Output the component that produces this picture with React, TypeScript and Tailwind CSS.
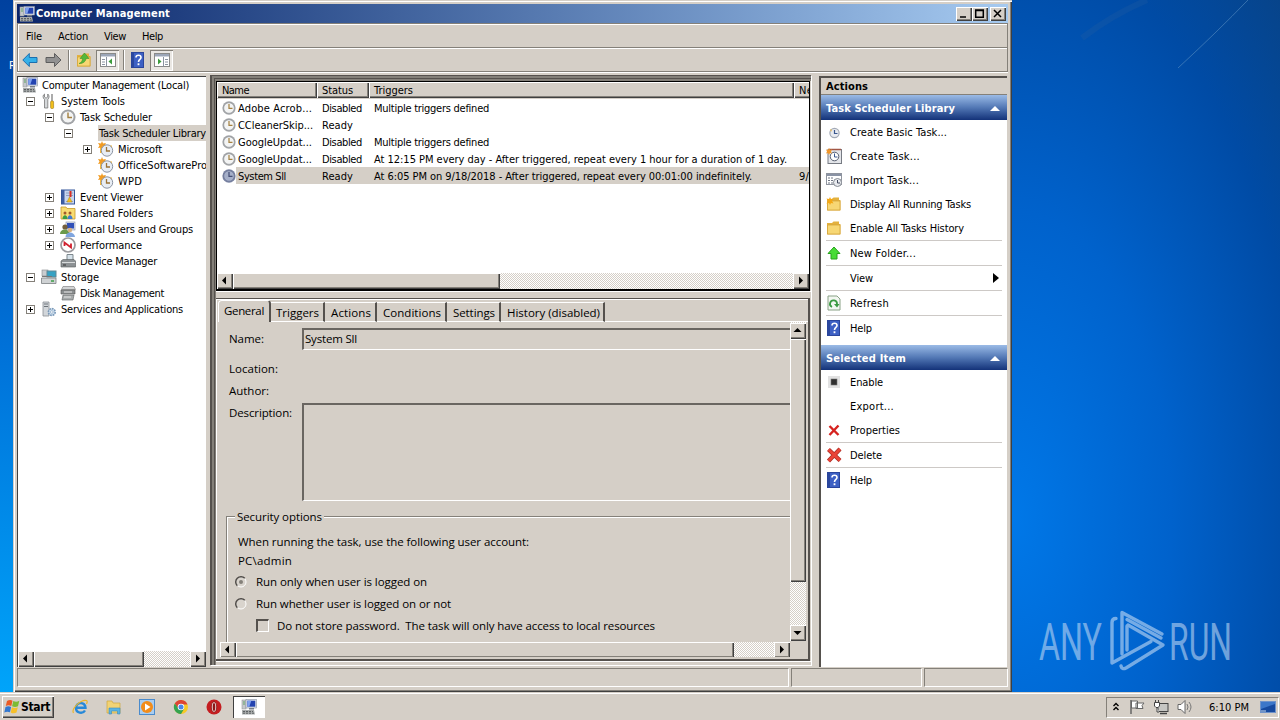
import { useLayoutEffect, useRef, useState, type ReactNode } from "react";

const TAHOMA = "font-['DejaVu_Sans_Condensed','DejaVu_Sans',sans-serif] text-[11px] leading-[13px]";
const SEGOE = "font-['Open_Sans','Noto_Sans',sans-serif] text-[11.5px] leading-[15px]";
const RAISED = "bg-[#d5cfc7] shadow-[inset_1px_1px_0_#fff,inset_-1px_-1px_0_#404040,inset_-2px_-2px_0_#848079]";
const TRACK = "bg-[conic-gradient(#fff_25%,#d5cfc7_0_50%,#fff_0_75%,#d5cfc7_0)] bg-[length:2px_2px]";

// Text that tracks its letters so that the run is exactly `w` pixels wide
function Label({ w, className = "", children }: { w: number; className?: string; children: string }) {
    const ref = useRef<HTMLSpanElement>(null);
    const [spacing, setSpacing] = useState(0);

    useLayoutEffect(() => {
        if (!ref.current) return;
        const el = ref.current;
        el.style.letterSpacing = "0px";
        const natural = el.getBoundingClientRect().width;
        const next = (w - natural) / children.length;
        el.style.letterSpacing = `${next}px`;
        setSpacing(next);
    }, [w, children]);

    return (
        <span ref={ref} className={`inline-block shrink-0 whitespace-pre ${className}`} style={{ letterSpacing: spacing }}>
            {children}
        </span>
    );
}

function Svg({ children, size = 16, className = "" }: { children?: ReactNode; size?: number; className?: string }) {
    return (
        <svg width={size} height={size} viewBox="0 0 16 16" className={`block shrink-0 ${className}`}>
            {children}
        </svg>
    );
}

/* ---------- icons ---------- */

const ComputerIcon = () => (
    <Svg>
        <rect x="1" y="1" width="4" height="9" fill="#c4c8cc" stroke="#999" strokeWidth=".6" />
        <path d="M2 3h2M2 5h2" stroke="#4a9a4a" strokeWidth=".8" />
        <rect x="5" y="0.5" width="10.5" height="8.5" fill="#e1e5ec" stroke="#8890a0" strokeWidth=".6" />
        <rect x="6.3" y="1.7" width="8" height="6" fill="#2343b0" />
        <path d="M6.3 1.7h4l-2 6h-2z" fill="#7fa0ee" />
        <path d="M8 9h5v1.5H8z" fill="#777e88" />
        <path d="M1 11h12l1 4.5H1z" fill="#a8abab" />
        <path d="M2 12.5h10M2 14.2h11" stroke="#5c6062" strokeDasharray="2 1" />
    </Svg>
);
const ToolsIcon = () => (
    <Svg>
        <path d="M3.5 1v3l1.5 1.2L6.7 4V1C8.5 2 8.5 5 6.8 6.5V15H3.5V6.5C1.600 5 1.600 2 3.500 1z" fill="#d5d8da" stroke="#777" strokeWidth=".8" />
        <path d="M11 1v7" stroke="#888" strokeWidth="1.4" />
        <rect x="9.6" y="8" width="3" height="7.500" rx="1" fill="#f2c01c" stroke="#9a7510" strokeWidth=".6" />
    </Svg>
);
const ClockIcon = ({ dark = false, size = 16 }: { dark?: boolean; size?: number }) => (
    <Svg size={size}>
        <circle cx="8" cy="8" r="7.6" fill={dark ? "#7983a2" : "#a3a5a8"} />
        <circle cx="8" cy="8" r="6" fill={dark ? "#a5afc9" : "#f3f4f4"} stroke={dark ? "#606a8c" : "#8b8e94"} strokeWidth=".6" />
        <path d="M8 3.500v5h4" fill="none" stroke={dark ? "#444d74" : "#a48142"} strokeWidth="1.4" />
    </Svg>
);
const ClockFolderIcon = () => (
    <Svg>
        <path d="M2 3h5l1 1.500h6V12H2z" fill="#f6b93b" />
        <path d="M4 0l1 2.500L8 2 6.500 4.500 8 7 5 6.500 4 9 3 6.500 0 7l1.500-2.500L0 2l3 .5z" fill="#f19b22" />
        <circle cx="9" cy="9.500" r="5.700" fill="#e8edf4" stroke="#8a93a1" />
        <path d="M8.500 6v4h3.500" fill="none" stroke="#9b7336" strokeWidth="1.300" />
    </Svg>
);
const EventIcon = () => (
    <Svg>
        <rect x="1.500" y="1" width="13" height="14" fill="#c7d4ee" stroke="#35569b" />
        <path d="M2 1h2.500v14H2z" fill="#3d5da3" />
        <path d="M6 4h7M6 6.500h7M6 12.500h7" stroke="#8294b8" strokeWidth=".8" />
        <path d="M9.500 2h2v6h-2z" fill="#d93025" />
        <path d="M7 13l2.500-5 2.500 5z" fill="#f4c21b" stroke="#b58a12" strokeWidth=".5" />
    </Svg>
);
const SharedIcon = () => (
    <Svg>
        <path d="M1 2h5l1 1.500h8V14H1z" fill="#f8dc72" stroke="#c69a2a" strokeWidth=".8" />
        <circle cx="5" cy="8" r="1.500" fill="#a15a2a" />
        <circle cx="10" cy="8" r="1.500" fill="#a15a2a" />
        <path d="M2.500 14c0-5 5-5 5 0z" fill="#3a9d43" />
        <path d="M7.500 14c0-5 5-5 5 0z" fill="#3f7bd0" />
    </Svg>
);
const UsersIcon = () => (
    <Svg>
        <rect x="6" y="1" width="9" height="8" fill="#dfe5f3" stroke="#8089a5" strokeWidth=".6" />
        <rect x="7" y="2" width="7" height="5.500" fill="#3050b8" />
        <circle cx="5" cy="6" r="2.600" fill="#75603d" />
        <path d="M0 13c0-6 9-6 10 0z" fill="#6c9a4b" />
        <circle cx="10" cy="9" r="2.200" fill="#d8b07e" />
        <path d="M5.500 16c0-6 9-6 9.500 0z" fill="#7fa5df" />
    </Svg>
);
const PerformanceIcon = () => (
    <Svg>
        <circle cx="8" cy="8" r="7" fill="#fff" stroke="#9a9a9e" strokeWidth="1.700" />
        <path d="M4.500 9V5.500l6.500 5V6.500" fill="none" stroke="#d0202e" strokeWidth="1.800" />
    </Svg>
);
const DeviceIcon = () => (
    <Svg>
        <path d="M7 7V1.500h6V7" fill="#d6e2ea" stroke="#7d878d" />
        <path d="M1 8l2-1.500h11L15.500 8v6H1z" fill="#8d9295" stroke="#565a5c" strokeWidth=".6" />
        <path d="M2 9.500h13" stroke="#d9dcdd" />
        <path d="M3 12h3" stroke="#333" />
    </Svg>
);
const StorageIcon = () => (
    <Svg>
        <rect x="1" y="1" width="6" height="6" fill="#c9cccf" stroke="#85898c" strokeWidth=".6" />
        <rect x="6" y="2" width="9" height="6" fill="#36a2c4" stroke="#5f8795" />
        <path d="M0.500 9h14.500v5.500H.5z" fill="#cfd2d4" stroke="#7b7f82" strokeWidth=".8" />
        <path d="M1 7.500h10" stroke="#777" />
        <path d="M10 12h3" stroke="#3c9e47" strokeWidth="1.500" />
    </Svg>
);
const DiskIcon = () => (
    <Svg>
        <path d="M3 1.500h11l1.500 3H1.500z" fill="#d2d4d5" stroke="#777" strokeWidth=".6" />
        <path d="M1 5h14v4H1z" fill="#8c9092" stroke="#555" strokeWidth=".6" />
        <path d="M3 10h11l-1 5H2z" fill="#a7abac" stroke="#606365" strokeWidth=".6" />
        <path d="M4 7h8M4 12h7" stroke="#e5e5e5" />
    </Svg>
);
const ServicesIcon = () => (
    <Svg>
        <path d="M2 1h6v14H2z" fill="#d2d6da" stroke="#8a9096" strokeWidth=".8" />
        <path d="M3 3h4M3 5.500h4" stroke="#6c7378" />
        <circle cx="10.800" cy="11" r="3.400" fill="#cfe0f0" stroke="#7998b8" strokeWidth="1.600" strokeDasharray="1.800 .8" />
        <circle cx="10.800" cy="11" r="1.300" fill="#fff" stroke="#7998b8" strokeWidth=".6" />
    </Svg>
);
const HelpIcon = () => (
    <Svg>
        <rect x="1.500" y=".5" width="12" height="15" fill="#3d60c4" stroke="#2a459c" />
        <path d="M2 1h2v14H2z" fill="#2a479f" />
        <path d="M6 5.500C6 2.500 11 2.500 11 5.500 11 7.500 8.500 7.500 8.500 10" fill="none" stroke="#fff" strokeWidth="1.600" />
        <rect x="7.600" y="11.300" width="1.800" height="1.900" fill="#fff" />
    </Svg>
);
const ConsoleIcon = ({ left = false }: { left?: boolean }) => (
    <Svg>
        <rect x=".5" y="1.500" width="15" height="13" fill="#fff" stroke="#8a8a88" />
        <path d="M1 2h14v2.500H1z" fill="#9ca6b8" />
        {left ? (
            <path d="M2 7.500h3M2 10h3M2 12.500h3M6.500 5v9.500" stroke="#8b93a0" />
        ) : (
            <path d="M11 7.500h3M11 10h3M11 12.500h3M9.500 5v9.500" stroke="#8b93a0" />
        )}
        <path d={left ? "M12 6.500v6L8.500 9.500z" : "M4 6.500v6l3.500-3z"} fill="#3c9c3c" />
    </Svg>
);
const FolderIcon = ({ star = false, up = false }: { star?: boolean; up?: boolean }) => (
    <Svg>
        <path d="M1 3h5l1.500-1.500H13V4h1.500v10.500H1z" fill="#e3b13f" />
        <path d="M1.500 5H14v9H1.500z" fill="#f7d774" stroke="#d0a035" strokeWidth=".7" />
        {star && <path d="M4 1l1 2 2.500-.5L6 5l1.500 2.500L5 7 4 9 3 7 .5 7.500 2 5 .5 2.500 3 3z" fill="#f5a814" />}
        {up && <path d="M3 11.500c2.500-1 3.500-3 3.500-5H4L8.500 1l4.500 5.500h-3C10 9 7 12 3 11.500z" fill="#54b83b" stroke="#2e8a24" strokeWidth=".5" />}
    </Svg>
);
const BasicTaskIcon = () => (
    <Svg>
        <circle cx="8.500" cy="9" r="4.600" fill="#e7eaf0" stroke="#a2a9b5" strokeWidth="1.200" />
        <path d="M8.500 6v3.500h3" fill="none" stroke="#39578e" strokeWidth="1.200" />
        <path d="M4 5l2 1-1 2z" fill="#efbf54" />
    </Svg>
);
const CreateTaskIcon = () => (
    <Svg>
        <rect x="2" y="1.500" width="13.500" height="14" fill="#e3e5e9" stroke="#777b83" />
        <path d="M2.500 1.500h12.500" stroke="#a15646" strokeWidth="1.500" />
        <circle cx="8.500" cy="8.500" r="4.300" fill="#fff" stroke="#555d6e" />
        <path d="M8.500 5.500v3.500h3" fill="none" stroke="#39578e" />
        <path d="M3 0l1 2 2-.5L5 3.500l1 2L4 5 3 7 2 5 0 5.500l1-2-1-2 2 .5z" fill="#f0962a" />
    </Svg>
);
const ImportIcon = () => (
    <Svg>
        <rect x=".5" y="1.500" width="15" height="11" fill="#fff" stroke="#8f949e" />
        <path d="M1 3h14" stroke="#8a93a5" strokeWidth="2" />
        <path d="M2 6h6M2 8.500h6M2 11h6" stroke="#6f7684" strokeDasharray="2 1" />
        <circle cx="11.500" cy="10.500" r="4" fill="#e8eaee" stroke="#868b93" />
        <path d="M11.500 8v3H14" fill="none" stroke="#444c60" />
    </Svg>
);
const UpArrowIcon = () => (
    <Svg>
        <path d="M8 2l6 6.500h-3V14H5V8.500H2z" fill="#48dc36" stroke="#28a21d" />
    </Svg>
);
const RefreshIcon = () => (
    <Svg>
        <path d="M2 1h9l3 3v11H2z" fill="#f2f7f1" stroke="#89a186" />
        <path d="M6 12A3.500 3.500 0 1 1 11 9" fill="none" stroke="#3a9a42" strokeWidth="1.800" />
        <path d="M8 9h5.500L11 12.500z" fill="#3a9a42" />
    </Svg>
);
const EnableIcon = () => (
    <Svg>
        <rect x="2" y="2" width="12" height="12" fill="#e2e2e2" />
        <rect x="5" y="5" width="6" height="6" fill="#303030" stroke="#777" strokeWidth=".6" />
    </Svg>
);
const CrossIcon = ({ big = false }: { big?: boolean }) => (
    <Svg>
        {big ? (
            <>
                <path d="M2.500 2.500l11.500 11M14 2L2.500 14" stroke="#a82a22" strokeWidth="4.200" />
                <path d="M2.500 2.500l11.500 11M14 2L2.500 14" stroke="#ea4438" strokeWidth="2.800" />
            </>
        ) : (
            <path d="M3.500 4l9 9M12.500 3.500L3.500 13" stroke="#d6231f" strokeWidth="2.400" />
        )}
    </Svg>
);
const NavArrow = ({ forward = false }: { forward?: boolean }) => (
    <svg width="17" height="16" viewBox="0 0 17 16" className="block">
        {forward ? (
            <path d="M16 8L9.500 1.500v4H1v5h8.500v4z" fill="#919191" stroke="#5d5d5d" />
        ) : (
            <path d="M.8 8l6.500-6.500v4H15v5H7.300v4z" fill="#35b0e8" stroke="#1b6fae" />
        )}
    </svg>
);

/* ---------- scroll bars ---------- */

const ARROWS = {
    left: "M9 3.500v8L5 7.500z",
    right: "M6 3.500v8l4-4z",
    up: "M3.500 9h8L7.500 5z",
    down: "M3.500 6h8L7.500 10z",
};

function ScrollButton({ dir }: { dir: keyof typeof ARROWS }) {
    return (
        <div className={`size-4 shrink-0 ${RAISED}`}>
            <svg width="16" height="16" className="block">
                <path d={ARROWS[dir]} fill="#000" />
            </svg>
        </div>
    );
}

function HScroll({ thumb }: { thumb: string }) {
    return (
        <div className={`flex h-4 w-full shrink-0 ${TRACK}`}>
            <ScrollButton dir="left" />
            <div className={`h-4 ${thumb} ${RAISED}`} />
            <div className="flex-1" />
            <ScrollButton dir="right" />
        </div>
    );
}

/* ---------- console tree ---------- */

interface TreeRow {
    label: string;
    w: number;
    indent: string;
    sign?: "+" | "-";
    icon?: ReactNode;
    selected?: boolean;
}

const L1 = "pl-[8px]";
const L2 = "pl-[27px]";
const L3 = "pl-[46px]";
const L4 = "pl-[65px]";

const TREE: TreeRow[] = [
    { label: "System Tools", w: 64, indent: L1, sign: "-", icon: <ToolsIcon /> },
    { label: "Task Scheduler", w: 72, indent: L2, sign: "-", icon: <ClockIcon /> },
    { label: "Task Scheduler Library", w: 107, indent: L3, sign: "-", selected: true },
    { label: "Microsoft", w: 44, indent: L4, sign: "+", icon: <ClockFolderIcon /> },
    { label: "OfficeSoftwarePro", w: 89, indent: L4, icon: <ClockFolderIcon /> },
    { label: "WPD", w: 24, indent: L4, icon: <ClockFolderIcon /> },
    { label: "Event Viewer", w: 63, indent: L2, sign: "+", icon: <EventIcon /> },
    { label: "Shared Folders", w: 73, indent: L2, sign: "+", icon: <SharedIcon /> },
    { label: "Local Users and Groups", w: 113, indent: L2, sign: "+", icon: <UsersIcon /> },
    { label: "Performance", w: 62, indent: L2, sign: "+", icon: <PerformanceIcon /> },
    { label: "Device Manager", w: 77, indent: L2, icon: <DeviceIcon /> },
    { label: "Storage", w: 38, indent: L1, sign: "-", icon: <StorageIcon /> },
    { label: "Disk Management", w: 84, indent: L2, icon: <DiskIcon /> },
    { label: "Services and Applications", w: 122, indent: L1, sign: "+", icon: <ServicesIcon /> },
];

function Expander({ sign }: { sign?: "+" | "-" }) {
    return (
        <svg width="9" height="9" className="mr-[7px] block shrink-0">
            {sign && <rect x=".5" y=".5" width="8" height="8" fill="#fff" stroke="#848079" />}
            {sign && <path d={sign === "+" ? "M2 4.500h5M4.500 2v5" : "M2 4.500h5"} stroke="#000" />}
        </svg>
    );
}

function Tree() {
    return (
        <div className="mt-0.5 flex h-[591px] w-[189px] shrink-0 flex-col overflow-hidden border-l border-t border-[#404040] bg-white">
            <div className="flex h-4 items-center pl-1">
                <ComputerIcon />
                <Label w={147} className="ml-1">Computer Management (Local)</Label>
            </div>
            {TREE.map((row) => (
                <div key={row.label} className={`flex h-4 items-center ${row.indent}`}>
                    <Expander sign={row.sign} />
                    <span className="-ml-px mr-px size-4 shrink-0">{row.icon}</span>
                    <span className={row.selected ? "ml-0.5 flex h-4 shrink-0 items-center bg-[#d5cfc7] pl-px" : "ml-[3px] flex shrink-0"}>
                        <Label w={row.w}>{row.label}</Label>
                    </span>
                </div>
            ))}
            <div className="flex-1" />
            <HScroll thumb="w-[110px]" />
        </div>
    );
}

/* ---------- task list ---------- */

const TASKS = [
    { name: "Adobe Acrob...", nw: 74, status: "Disabled", sw: 40, trigger: "Multiple triggers defined", tw: 115 },
    { name: "CCleanerSkip...", nw: 75, status: "Ready", sw: 31, trigger: "", tw: 0 },
    { name: "GoogleUpdat...", nw: 74, status: "Disabled", sw: 40, trigger: "Multiple triggers defined", tw: 115 },
    { name: "GoogleUpdat...", nw: 74, status: "Disabled", sw: 40, trigger: "At 12:15 PM every day - After triggered, repeat every 1 hour for a duration of 1 day.", tw: 413 },
    { name: "System Sll", nw: 48, status: "Ready", sw: 31, trigger: "At 6:05 PM on 9/18/2018 - After triggered, repeat every 00:01:00 indefinitely.", tw: 378, next: "9/" },
];

const HEAD = "flex h-full shrink-0 items-center pl-[5px] shadow-[inset_1px_1px_0_#fff,inset_-1px_-1px_0_#404040,inset_-2px_-2px_0_#848079]";

function TaskList() {
    return (
        <div className="flex h-[210px] w-[594px] shrink-0 flex-col overflow-hidden border-b-2 border-l border-r border-t border-black bg-white">
            <div className="flex h-[17px] shrink-0 bg-[#d5cfc7] pb-px">
                <div className={`w-[100px] pt-px ${HEAD}`}><Label w={27}>Name</Label></div>
                <div className={`w-[52px] pt-px ${HEAD}`}><Label w={31}>Status</Label></div>
                <div className={`w-[425px] pt-px ${HEAD}`}><Label w={39}>Triggers</Label></div>
                <div className={`w-[60px] pt-px ${HEAD}`}><Label w={14}>Ne</Label></div>
            </div>
            {TASKS.map((t, i) => (
                <div key={i} className="flex h-[17px] shrink-0 items-center pl-[5px]">
                    <ClockIcon size={14} dark={!!t.next} />
                    <div className={`flex h-[17px] flex-1 items-center overflow-hidden pl-[2px] pt-px ${t.next ? "bg-[#d5cfc7]" : ""}`}>
                        <div className="w-[84px] shrink-0"><Label w={t.nw}>{t.name}</Label></div>
                        <div className="w-[52px] shrink-0"><Label w={t.sw}>{t.status}</Label></div>
                        <div className="w-[425px] shrink-0">{t.trigger && <Label w={t.tw}>{t.trigger}</Label>}</div>
                        {t.next && <Label w={10}>{t.next}</Label>}
                    </div>
                </div>
            ))}
            <div className="flex-1" />
            <HScroll thumb="w-[267px]" />
        </div>
    );
}

/* ---------- task properties ---------- */

const TABS = [
    { label: "Triggers", w: 43, box: "w-[54px] pl-[5px]" },
    { label: "Actions", w: 40, box: "w-[52px] pl-[6px]" },
    { label: "Conditions", w: 58, box: "w-[70px] pl-[6px]" },
    { label: "Settings", w: 42, box: "w-[54px] pl-[6px]" },
    { label: "History (disabled)", w: 93, box: "w-[104px] pl-[6px]" },
];

const SUNKEN = "border-l-2 border-t-2 border-b border-b-white border-l-[#6a6661] border-t-[#6a6661]";

function Radio({ checked = false }: { checked?: boolean }) {
    return (
        <svg width="12" height="12" className="block shrink-0">
            <circle cx="6" cy="6" r="5" fill="#d9d4cd" stroke="#fff" />
            <path d="M2.300 9.800A5 5 0 0 1 9.800 2.300" fill="none" stroke="#504c48" strokeWidth="1.500" />
            {checked && <circle cx="6" cy="6" r="2" fill="#848079" />}
        </svg>
    );
}

function Properties() {
    return (
        <div className={`flex h-[363px] w-[594px] shrink-0 flex-col border-b-2 border-r-2 border-t border-[#55514d] bg-[#d5cfc7] shadow-[inset_1px_1px_0_#fff] ${SEGOE}`}>
            <div className="flex h-[23px] shrink-0 items-end pl-[2px]">
                <div className="flex h-[22px] w-[53px] items-center rounded-t-sm border-l border-r-2 border-t border-l-white border-r-[#55514d] border-t-white pb-[2px] pl-[5px]">
                    <Label w={40}>General</Label>
                </div>
                {TABS.map((tab) => (
                    <div key={tab.label} className={`flex h-[20px] items-center border-b border-r-2 border-t border-b-white border-r-[#55514d] border-t-white ${tab.box}`}>
                        <Label w={tab.w}>{tab.label}</Label>
                    </div>
                ))}
                <div className="h-px flex-1 bg-white" />
            </div>
            <div className="flex flex-1 overflow-hidden pb-[2px] pl-[4px] pr-[2px]">
                <div className="flex w-[570px] shrink-0 flex-col overflow-hidden">
                    <div className="flex h-[320px] shrink-0 flex-col overflow-hidden pt-[6px]">
                        <div className="flex h-[24px] shrink-0">
                            <div className="w-[82px] pl-[9px] pt-[3px]"><Label w={35}>Name:</Label></div>
                            <div className={`h-[22px] flex-1 pl-px pt-px ${SUNKEN}`}><Label w={52}>System Sll</Label></div>
                        </div>
                        <div className="flex h-[26px] shrink-0 items-end pb-[2px] pl-[9px]"><Label w={49}>Location:</Label></div>
                        <div className="flex h-[22px] shrink-0 items-end pb-[2px] pl-[9px]"><Label w={40}>Author:</Label></div>
                        <div className="flex h-[109px] shrink-0 pt-[3px]">
                            <div className="w-[82px] pl-[9px] pt-[2px]"><Label w={63}>Description:</Label></div>
                            <div className={`h-[98px] flex-1 ${SUNKEN}`} />
                        </div>
                        <div className="flex h-[15px] shrink-0 items-center pl-[6px]">
                            <div className="mt-[7px] h-[8px] w-[9px] self-start border-l border-t border-[#848079] shadow-[inset_1px_1px_0_#fff]" />
                            <Label w={89} className="px-[2px]">Security options</Label>
                            <div className="h-[2px] flex-1 border-t border-[#848079] bg-white" />
                        </div>
                        <div className="ml-[6px] h-[120px] shrink-0 border-l border-[#848079] pl-[10px] pt-[10px] shadow-[inset_1px_0_0_#fff]">
                            <div className="flex h-[19px]"><Label w={291} className="ml-px">When running the task, use the following user account:</Label></div>
                            <div className="flex h-[21px]"><Label w={54} className="ml-px">PC\admin</Label></div>
                            <div className="-ml-[2px] flex h-[22px] items-start">
                                <div className="mt-[2px] mr-[9px]"><Radio checked /></div>
                                <Label w={171}>Run only when user is logged on</Label>
                            </div>
                            <div className="-ml-[2px] flex h-[22px] items-start">
                                <div className="mt-[2px] mr-[9px]"><Radio /></div>
                                <Label w={195}>Run whether user is logged on or not</Label>
                            </div>
                            <div className="flex items-start pl-[19px]">
                                <div className="mt-px mr-[8px] size-[13px] border-2 border-b border-r border-b-white border-l-[#55514d] border-r-white border-t-[#55514d]" />
                                <Label w={378}>Do not store password.  The task will only have access to local resources</Label>
                            </div>
                        </div>
                    </div>
                    <HScroll thumb="w-[498px]" />
                </div>
                <div className={`mb-4 flex w-4 flex-col pt-px ${TRACK}`}>
                    <ScrollButton dir="up" />
                    <div className={`h-[243px] ${RAISED}`} />
                    <div className="flex-1" />
                    <ScrollButton dir="down" />
                </div>
            </div>
        </div>
    );
}

/* ---------- actions pane ---------- */

interface Action {
    label: string;
    w: number;
    icon?: ReactNode;
    rule?: boolean;
    submenu?: boolean;
}

const LIBRARY_ACTIONS: Action[] = [
    { label: "Create Basic Task...", w: 97, icon: <BasicTaskIcon /> },
    { label: "Create Task...", w: 70, icon: <CreateTaskIcon /> },
    { label: "Import Task...", w: 69, icon: <ImportIcon /> },
    { label: "Display All Running Tasks", w: 121, icon: <FolderIcon star /> },
    { label: "Enable All Tasks History", w: 114, icon: <FolderIcon /> },
    { label: "New Folder...", w: 66, icon: <UpArrowIcon />, rule: true },
    { label: "View", w: 23, rule: true, submenu: true },
    { label: "Refresh", w: 39, icon: <RefreshIcon />, rule: true },
    { label: "Help", w: 22, icon: <HelpIcon />, rule: true },
];

const ITEM_ACTIONS: Action[] = [
    { label: "Enable", w: 33, icon: <EnableIcon /> },
    { label: "Export...", w: 44 },
    { label: "Properties", w: 50, icon: <CrossIcon /> },
    { label: "Delete", w: 32, icon: <CrossIcon big />, rule: true },
    { label: "Help", w: 22, icon: <HelpIcon />, rule: true },
];

function ActionGroup({ title, w, items }: { title: string; w: number; items: Action[] }) {
    return (
        <>
            <div className="flex h-[25px] shrink-0 items-center justify-between bg-linear-to-b from-[#9bbbe6] via-[#5378b5] to-[#143279] pl-[5px] pr-[7px] pt-px font-bold text-white">
                <Label w={w}>{title}</Label>
                <svg width="10" height="5" className="block"><path d="M0 5l5-5 5 5z" fill="#fff" /></svg>
            </div>
            {items.map((a) => (
                <div key={a.label} className="px-[5px]">
                    {a.rule && <div className="h-px bg-[#cdc9c6]" />}
                    <div className="flex h-6 items-center justify-between">
                        <div className="flex items-center gap-2">
                            {a.icon ?? <span className="size-4" />}
                            <Label w={a.w}>{a.label}</Label>
                        </div>
                        {a.submenu && <svg width="6" height="10" className="mr-[3px] block"><path d="M0 0l6 5-6 5z" /></svg>}
                    </div>
                </div>
            ))}
        </>
    );
}

function ActionsPane() {
    return (
        <div className="ml-[8px] mt-0.5 flex h-[591px] w-[188px] shrink-0 flex-col border-l-2 border-t-2 border-[#55514d] bg-white">
            <div className="h-[17px] shrink-0 border-b border-[#848079] bg-[#d5cfc7] pl-[5px] pt-[2px] font-bold"><Label w={42}>Actions</Label></div>
            <ActionGroup title="Task Scheduler Library" w={129} items={LIBRARY_ACTIONS} />
            <div className="h-[5px] shrink-0" />
            <ActionGroup title="Selected Item" w={80} items={ITEM_ACTIONS} />
        </div>
    );
}

/* ---------- window ---------- */

function CaptionButton({ d, className = "" }: { d: string; className?: string }) {
    return (
        <div className={`h-[14px] w-4 ${RAISED} ${className}`}>
            <svg width="16" height="14" className="block"><path d={d} fill="none" stroke="#000" strokeWidth="1.500" /></svg>
        </div>
    );
}

const MENU = [
    { label: "File", w: 16 },
    { label: "Action", w: 30 },
    { label: "View", w: 22 },
    { label: "Help", w: 21 },
];

const Divider = () => <div className="mx-[6px] h-[20px] w-[2px] border-l border-[#848079] bg-white" />;

const PRESSED = "flex h-[21px] w-[23px] items-center justify-center bg-[#eae7e3] shadow-[inset_1px_1px_0_#848079,inset_-1px_-1px_0_#fff]";

function ConsoleWindow() {
    return (
        <div className="relative ml-[13px] flex h-[692px] w-[999px] shrink-0 flex-col bg-[#d5cfc7] px-1 pt-1 shadow-[inset_1px_1px_0_#d5cfc7,inset_2px_2px_0_#fff,inset_-1px_-1px_0_#404040,inset_-2px_-2px_0_#848079]">
            <div className="flex h-[19px] shrink-0 items-center bg-linear-to-r from-[#0a246a] to-[#a6caf0] pl-[2px] pr-[2px] text-white">
                <ComputerIcon />
                <Label w={134} className="ml-px font-bold">Computer Management</Label>
                <div className="flex-1" />
                <CaptionButton d="M4 10h6" />
                <CaptionButton d="M3.700 3h7.600v7.300H3.700zM3 3.500h9" />
                <CaptionButton d="M4 3l7 7M11 3l-7 7" className="ml-[2px]" />
            </div>
            <div className="flex h-[25px] shrink-0 items-center gap-4 border-b border-l border-r border-t border-[#848079] pl-[8px] pt-[2px] shadow-[inset_1px_1px_0_#fff]">
                {MENU.map((m) => <Label key={m.label} w={m.w}>{m.label}</Label>)}
            </div>
            <div className="flex h-[24px] shrink-0 items-center border-b border-l border-r border-[#848079] pl-[4px] pt-px shadow-[inset_1px_1px_0_#fff,0_1px_0_#fff]">
                <NavArrow />
                <div className="w-[6px]" />
                <NavArrow forward />
                <Divider />
                <FolderIcon up />
                <div className={`ml-[4px] ${PRESSED}`}><ConsoleIcon left /></div>
                <div className="-mr-[1px] ml-[-2px]"><Divider /></div>
                <HelpIcon />
                <div className={`ml-[4px] ${PRESSED}`}><ConsoleIcon /></div>
            </div>
            <div className="flex h-[595px] shrink-0 pt-[2px]">
                <Tree />
                <div className="ml-[4px] mt-px flex h-[590px] w-[601px] shrink-0 flex-col pl-[6px] pt-[6px] shadow-[inset_2px_1px_0_#55514d,inset_4px_3px_0_#848079,inset_5px_4px_0_#55514d,inset_6px_6px_0_#848079,1px_1px_0_#fff]">
                    <TaskList />
                    <div className="h-[7px] w-[595px] shrink-0 border-t border-white bg-[#d5cfc7]" />
                    <Properties />
                    <div className="flex-1 bg-[#d5cfc7] shadow-[inset_0_1px_0_#fff]" />
                </div>
                <ActionsPane />
            </div>
            <div className="flex h-[20px] shrink-0 gap-[2px] pt-[1px]">
                <div className="w-[772px] border border-[#848079] border-b-white border-r-white" />
                <div className="w-[131px] border border-[#848079] border-b-white border-r-white" />
                <div className="flex-1 border border-[#848079] border-b-white border-r-white" />
            </div>
        </div>
    );
}

/* ---------- taskbar ---------- */

const WindowsFlag = () => (
    <svg width="17" height="16" viewBox="0 0 17 16" className="block">
        <path d="M3 2q3-2 5.500-.3L7.300 7Q4.500 5.500 1.800 7z" fill="#ea5a24" />
        <path d="M9.300 2q3 1.500 6-.2L14 7.200q-3 1.500-5.900 0z" fill="#7dbb32" />
        <path d="M1.500 8q3-1.500 5.600 0L6 13.200Q3 12 .3 13.500z" fill="#3277cf" />
        <path d="M7.900 8.300q3 1.500 5.900 0l-1.300 5.300q-3 1.500-5.800-.2z" fill="#f7c02a" />
    </svg>
);

function QuickLaunch() {
    return (
        <div className="ml-[18px] flex items-center gap-[17.5px]">
            <Svg>
                <path d="M4.500 8.800h9C13.500 2.500 4 2.500 4 9c0 5.500 7 6 9 2.500" fill="none" stroke="#2789d8" strokeWidth="2.400" />
                <path d="M1.500 14C-1 10 9 0 14.500 1.500c1.300.8.5 2.500 0 3.500" fill="none" stroke="#eab52c" strokeWidth="1.200" />
            </Svg>
            <Svg>
                <path d="M1 2h5l1 2h7v10H1z" fill="#f1d375" stroke="#cfa63e" strokeWidth=".7" />
                <path d="M3 15V9h11v6h-2.500v-3h-6v3z" fill="#59b4e3" stroke="#3d8cba" strokeWidth=".6" />
            </Svg>
            <Svg>
                <rect x=".5" y=".5" width="15" height="15" fill="#a9cdf0" stroke="#4a8bcc" />
                <circle cx="8" cy="8" r="6" fill="#f28c1a" />
                <path d="M6 4.500l5.500 3.500L6 11.500z" fill="#fff" />
            </Svg>
            <Svg>
                <circle cx="8" cy="8" r="7" fill="#f6c927" />
                <path d="M1.800 4.500A7 7 0 0 1 14.500 5.500H8L5 9.500z" fill="#dd4435" />
                <path d="M1.800 4.500A7 7 0 0 0 8 15l3-5-5.500-.5z" fill="#34a350" />
                <circle cx="8" cy="8" r="3.300" fill="#fff" />
                <circle cx="8" cy="8" r="2.500" fill="#4a86e8" />
            </Svg>
            <Svg>
                <circle cx="8" cy="8" r="7.500" fill="#c41d20" />
                <ellipse cx="8" cy="8" rx="2.700" ry="5.300" fill="#f3e5e4" stroke="#84100f" strokeWidth=".8" />
                <ellipse cx="8" cy="8" rx="1.300" ry="4" fill="#8d1516" />
            </Svg>
        </div>
    );
}

function Taskbar() {
    return (
        <div className="flex h-[28px] w-full shrink-0 items-center bg-[#d5cfc7] pl-[2px] pt-[2px] shadow-[inset_0_1px_0_#d5cfc7,inset_0_2px_0_#fff]">
            <div className={`flex h-[22px] w-[52px] items-center pl-[2px] font-bold ${RAISED}`}>
                <WindowsFlag />
                <Label w={29} className="text-[12px]">Start</Label>
            </div>
            <QuickLaunch />
            <div className="ml-[11px] flex h-[22px] w-[32px] items-center justify-center bg-white shadow-[inset_1px_1px_0_#404040,inset_-1px_-1px_0_#fff]">
                <ComputerIcon />
            </div>
            <div className="flex-1" />
            <div className="mr-px flex h-[21px] w-[173px] items-center border border-[#848079] border-b-white border-r-white pl-[5px]">
                <svg width="8" height="10" className="block"><path d="M1.500 4l2.500-2.500L6.500 4M1.500 8l2.500-2.500L6.500 8" fill="none" stroke="#000" strokeWidth="1.400" /></svg>
                <Svg className="ml-[9px]">
                    <path d="M7 4h8l-2 2.500 1 3H7zM2.500 2h6v7h-6z" fill="#fff" stroke="#666" />
                    <path d="M2 1v14" stroke="#666" strokeWidth="1.500" />
                </Svg>
                <Svg className="ml-[8px]">
                    <rect x="5" y="4.500" width="10" height="8" fill="#c6c6c3" stroke="#444" />
                    <path d="M7 14.500h7" stroke="#444" strokeWidth="1.500" />
                    <path d="M1.500 3.500h5V7L5 8.500H3L1.500 7zM2.500 1v2.500M5.500 1v2.500M4 8.500V13h2" fill="#fff" stroke="#444" />
                </Svg>
                <Svg className="ml-[8px]">
                    <path d="M1 5.500h3l4-4v13l-4-4H1z" fill="#fff" stroke="#666" />
                    <path d="M10 5q2 3 0 6M12 3q4 5 0 10" fill="none" stroke="#777" />
                </Svg>
                <Label w={40} className="ml-[16px]">6:10 PM</Label>
                <svg width="16" height="14" className="ml-[11px] block">
                    <rect x=".5" y="1.500" width="15" height="11" fill="#164a9f" stroke="#6f93ca" />
                    <path d="M1 2h14v2L1 9z" fill="#3c77c9" />
                    <path d="M1 11h5" stroke="#cde" />
                </svg>
            </div>
        </div>
    );
}

function Watermark() {
    return (
        <svg width="196" height="64" viewBox="1037 608 196 64" className="absolute left-[1037px] top-[608px] opacity-60">
            <g fill="#b9d4f2" fontFamily="Roboto, sans-serif" fontSize="52" fontWeight="400">
                <text x="1039" y="660" textLength="63" lengthAdjust="spacingAndGlyphs">ANY</text>
                <text x="1169" y="660" textLength="63" lengthAdjust="spacingAndGlyphs">RUN</text>
            </g>
            <g fill="none" stroke="#c3dbf5" strokeWidth="3.400" strokeLinejoin="round" strokeLinecap="round">
                <path d="M1116 618.500q-4 0-4 4v40.500l39-21.500" />
                <path d="M1122 654v-41.500l40 21.500M1161 638l-34-18.500M1127 626v24" />
                <path d="M1121 666q1 4 5 2l37-23-35-20" />
            </g>
        </svg>
    );
}

export default function App() {
    return (
        <div className={`relative flex h-[720px] w-[1280px] flex-col overflow-hidden bg-[#0062cc] text-black ${TAHOMA}`}>
            <div className="absolute left-0 top-0 h-[692px] w-[13px] bg-linear-to-b from-[#00419f] via-[#0071d8] to-[#00a4fa]" />
            <div className="absolute left-[1012px] top-0 h-[692px] w-[268px] bg-[radial-gradient(ellipse_at_0%_75%,#0078e8_0%,#0062cc_42%,#004ba5_78%,#07448a_100%)]" />
            <svg width="268" height="160" className="absolute left-[1012px] top-0">
                <path d="M166 68Q205 32 236 0" fill="none" stroke="#5288bf" strokeOpacity=".65" />
                <path d="M70 38Q100 15 135 0" fill="none" stroke="#26619f" strokeWidth="6" strokeOpacity=".25" />
            </svg>
            <span className="absolute left-[9px] top-[59px] text-white">R</span>
            <ConsoleWindow />
            <Watermark />
            <Taskbar />
        </div>
    );
}
